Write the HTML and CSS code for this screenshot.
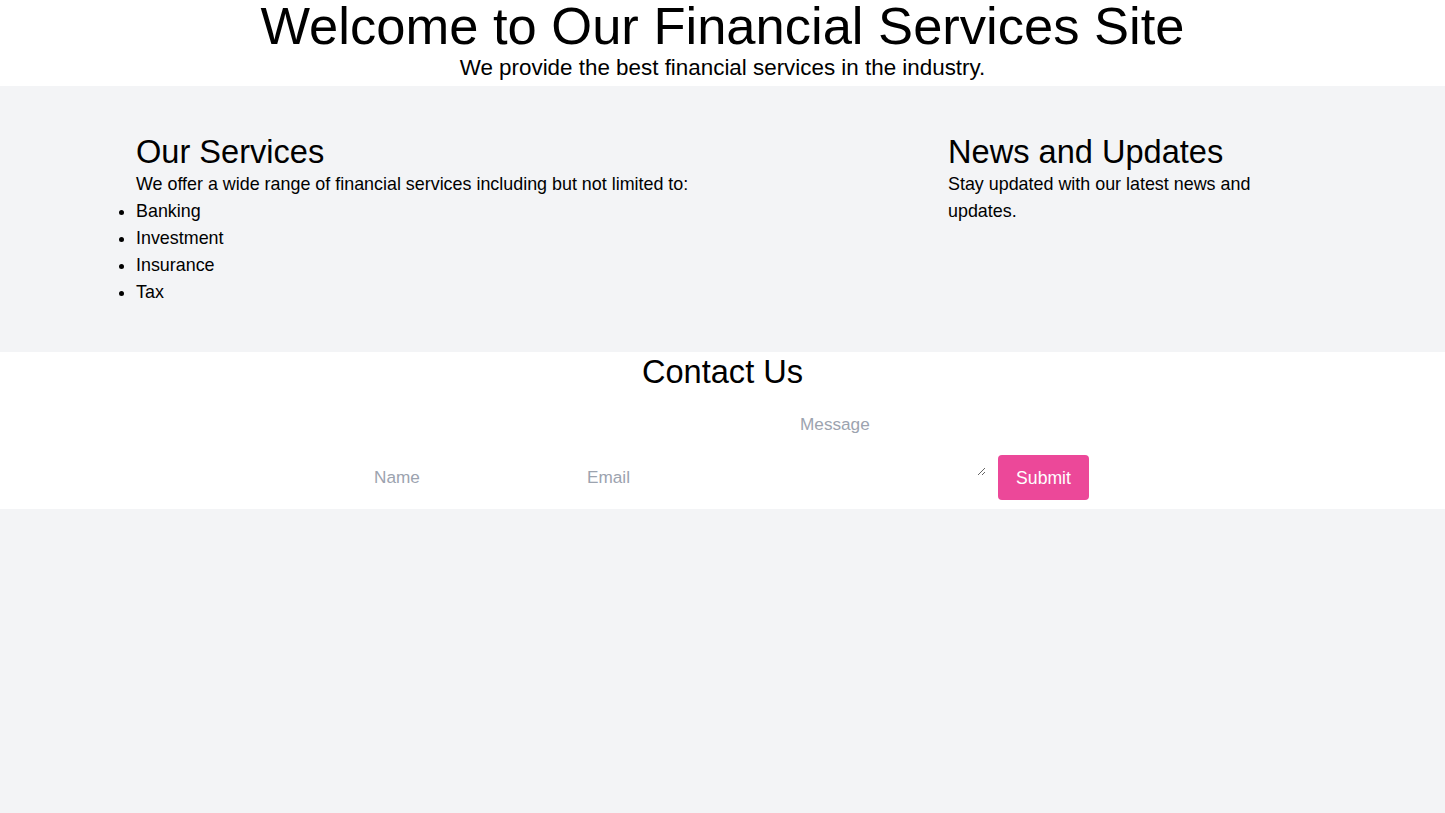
FILE: index.html
```html
<!DOCTYPE html>
<html lang="en">
<head>
<meta charset="utf-8">
<title>Financial Services</title>
<link rel="stylesheet" href="styles.css">
</head>
<body>
<header class="site-header">
  <h1 class="site-title">Welcome to Our Financial Services Site</h1>
  <p class="site-tagline">We provide the best financial services in the industry.</p>
</header>
<main class="info">
  <section class="info-col info-services">
    <h2 class="info-heading">Our Services</h2>
    <p class="info-text">We offer a wide range of financial services including but not limited to:</p>
    <ul class="info-list">
      <li>Banking</li>
      <li>Investment</li>
      <li>Insurance</li>
      <li>Tax</li>
    </ul>
  </section>
  <section class="info-col info-news">
    <h2 class="info-heading">News and Updates</h2>
    <p class="info-text">Stay updated with our latest news and updates.</p>
  </section>
</main>
<section class="contact">
  <h2 class="contact-heading">Contact Us</h2>
  <form class="contact-form">
    <input class="field field-name" type="text" placeholder="Name">
    <input class="field field-email" type="email" placeholder="Email">
    <textarea class="field field-message" placeholder="Message"></textarea>
    <button class="submit" type="submit">Submit</button>
  </form>
</section>
</body>
</html>
```
FILE: styles.css
```css
html, body {
  margin: 0;
  padding: 0;
}
body {
  background: #f3f4f6;
  font-family: "Liberation Sans", Arial, Helvetica, sans-serif;
  color: #000;
  min-height: 813px;
}
.site-header {
  background: #fff;
  text-align: center;
  padding-bottom: 2px;
}
.site-title {
  margin: 0;
  font-size: 52.5px;
  line-height: 52px;
  font-weight: 400;
}
.site-tagline {
  margin: 0;
  font-size: 22.4px;
  line-height: 32px;
}
.info {
  display: grid;
  grid-template-columns: 812px 358px;
  padding: 47px 0 46px 136px;
}
.info-heading {
  margin: 0;
  font-size: 32.6px;
  line-height: 38px;
  font-weight: 400;
}
.info-text {
  margin: 0;
  font-size: 17.9px;
  line-height: 27px;
}
.info-list {
  margin: 0;
  padding: 0;
  list-style: disc;
  font-size: 17.9px;
  line-height: 27px;
}
.contact {
  background: #fff;
  text-align: center;
  padding: 2px 0 9px;
}
.contact-heading {
  margin: 0;
  font-size: 32.6px;
  line-height: 36px;
  font-weight: 400;
}
.contact-form {
  display: flex;
  justify-content: center;
  align-items: flex-start;
  margin: 0;
  padding: 14px 0 0 6px;
}
.field {
  font-family: "Liberation Sans", Arial, Helvetica, sans-serif;
  font-size: 17.2px;
  line-height: 24px;
  border: none;
  outline: none;
  background: #fff;
  padding: 8px 12px;
  margin: 0;
  color: #000;
  box-sizing: border-box;
}
.field::placeholder {
  color: #9ca3af;
}
.field-name,
.field-email {
  width: 213px;
  height: 40px;
  margin-top: 53px;
}
.field-message {
  width: 198px;
  height: 72px;
  margin-right: 12px;
}
.submit {
  font-family: "Liberation Sans", Arial, Helvetica, sans-serif;
  font-size: 17.6px;
  line-height: 24px;
  background: #ec4899;
  color: #fff;
  border: none;
  border-radius: 4px;
  padding: 0;
  width: 91px;
  height: 45px;
  margin-top: 51px;
}
```
